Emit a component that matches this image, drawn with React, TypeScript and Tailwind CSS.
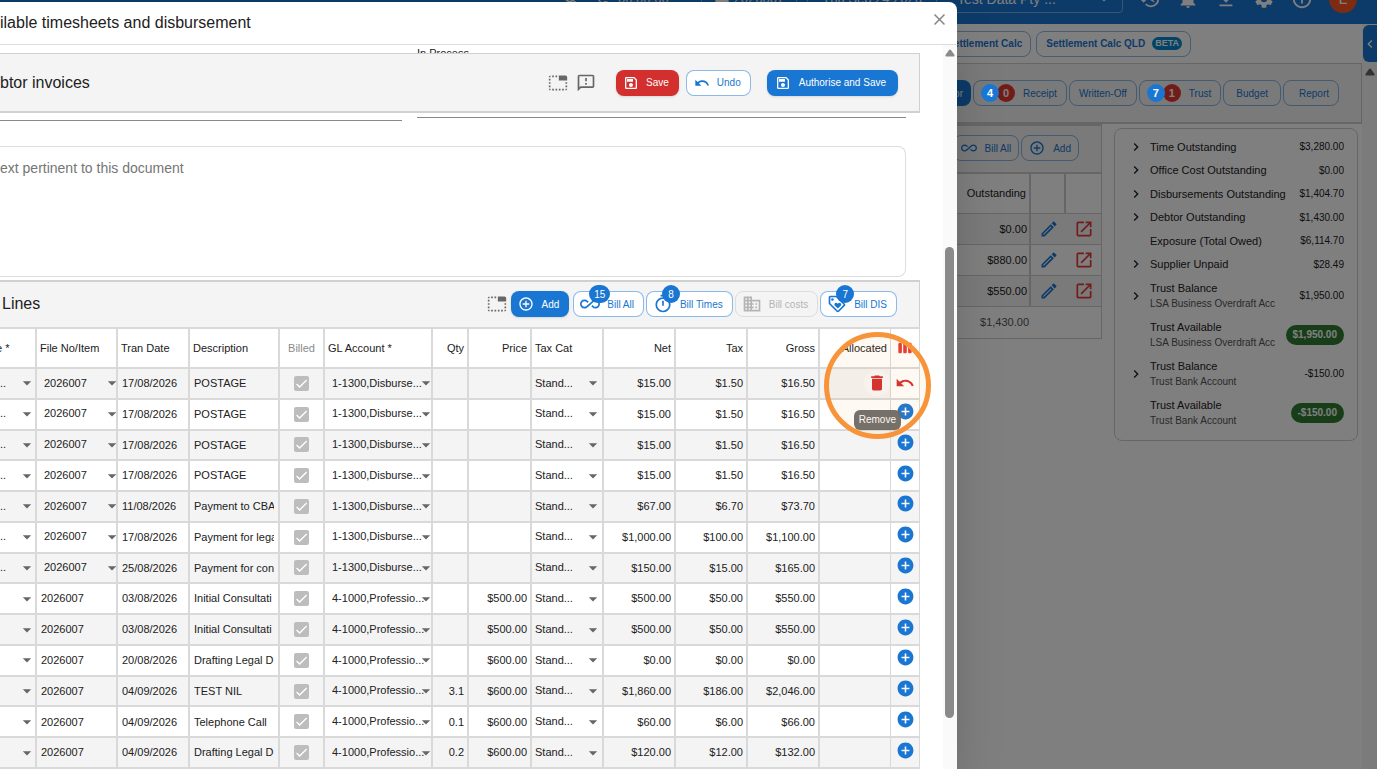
import type { ReactNode } from "react";
import clsx from "clsx";
import {
  MdAddCircle,
  MdAddCircleOutline,
  MdAllInclusive,
  MdArrowDropDown,
  MdCheck,
  MdChevronLeft,
  MdChevronRight,
  MdClose,
  MdDelete,
  MdDomain,
  MdDownload,
  MdHistory,
  MdNotifications,
  MdOpenInNew,
  MdOutlineFeedback,
  MdOutlineInfo,
  MdOutlineLoyalty,
  MdOutlineModeEdit,
  MdOutlineSave,
  MdOutlineTimer,
  MdPhone,
  MdSearch,
  MdSettings,
  MdTabUnselected,
  MdUndo,
  MdViewWeek,
  MdWork,
} from "react-icons/md";

type Line = {
  file: string;
  fileSelect?: boolean;
  date: string;
  description: string;
  account: string;
  qty?: string;
  price?: string;
  net: string;
  tax: string;
  gross: string;
};

const DIS = "1-1300,Disburse...";
const PRO = "4-1000,Professio...";

const lines: Line[] = [
  { file: "2026007", fileSelect: true, date: "17/08/2026", description: "POSTAGE", account: DIS, net: "$15.00", tax: "$1.50", gross: "$16.50" },
  { file: "2026007", fileSelect: true, date: "17/08/2026", description: "POSTAGE", account: DIS, net: "$15.00", tax: "$1.50", gross: "$16.50" },
  { file: "2026007", fileSelect: true, date: "17/08/2026", description: "POSTAGE", account: DIS, net: "$15.00", tax: "$1.50", gross: "$16.50" },
  { file: "2026007", fileSelect: true, date: "17/08/2026", description: "POSTAGE", account: DIS, net: "$15.00", tax: "$1.50", gross: "$16.50" },
  { file: "2026007", fileSelect: true, date: "11/08/2026", description: "Payment to CBA", account: DIS, net: "$67.00", tax: "$6.70", gross: "$73.70" },
  { file: "2026007", fileSelect: true, date: "17/08/2026", description: "Payment for lega", account: DIS, net: "$1,000.00", tax: "$100.00", gross: "$1,100.00" },
  { file: "2026007", fileSelect: true, date: "25/08/2026", description: "Payment for con", account: DIS, net: "$150.00", tax: "$15.00", gross: "$165.00" },
  { file: "2026007", date: "03/08/2026", description: "Initial Consultati", account: PRO, price: "$500.00", net: "$500.00", tax: "$50.00", gross: "$550.00" },
  { file: "2026007", date: "03/08/2026", description: "Initial Consultati", account: PRO, price: "$500.00", net: "$500.00", tax: "$50.00", gross: "$550.00" },
  { file: "2026007", date: "20/08/2026", description: "Drafting Legal D", account: PRO, price: "$600.00", net: "$0.00", tax: "$0.00", gross: "$0.00" },
  { file: "2026007", date: "04/09/2026", description: "TEST NIL", account: PRO, qty: "3.1", price: "$600.00", net: "$1,860.00", tax: "$186.00", gross: "$2,046.00" },
  { file: "2026007", date: "04/09/2026", description: "Telephone Call", account: PRO, qty: "0.1", price: "$600.00", net: "$60.00", tax: "$6.00", gross: "$66.00" },
  { file: "2026007", date: "04/09/2026", description: "Drafting Legal D", account: PRO, qty: "0.2", price: "$600.00", net: "$120.00", tax: "$12.00", gross: "$132.00" },
];

const balances = [
  { label: "Time Outstanding", value: "$3,280.00", open: true },
  { label: "Office Cost Outstanding", value: "$0.00", open: true },
  { label: "Disbursements Outstanding", value: "$1,404.70", open: true },
  { label: "Debtor Outstanding", value: "$1,430.00", open: true },
  { label: "Exposure (Total Owed)", value: "$6,114.70", open: false },
  { label: "Supplier Unpaid", value: "$28.49", open: true },
];

const trusts = [
  { label: "Trust Balance", account: "LSA Business Overdraft Acc", value: "$1,950.00", open: true },
  { label: "Trust Available", account: "LSA Business Overdraft Acc", value: "$1,950.00", open: false },
  { label: "Trust Balance", account: "Trust Bank Account", value: "-$150.00", open: true },
  { label: "Trust Available", account: "Trust Bank Account", value: "-$150.00", open: false },
];

const OutlineButton = ({ children, className }: { children: ReactNode; className?: string }) => (
  <button
    className={clsx(
      "relative flex h-[26px] shrink-0 items-center rounded-lg border border-[#1976d2]/50 whitespace-nowrap text-[#1976d2]",
      className
    )}
  >
    {children}
  </button>
);

const Badge = ({ children }: { children: ReactNode }) => (
  <span className="absolute -top-[7px] left-[15px] flex h-[18px] min-w-[18px] items-center justify-center rounded-full bg-[#1976d2] px-[5px] text-[10px] text-white">
    {children}
  </span>
);

const CountPair = ({ first, second }: { first: string; second: string }) => (
  <span className="flex text-[11px] font-bold text-white">
    <span className="z-10 flex size-[18px] items-center justify-center rounded-full bg-[#1976d2]">{first}</span>
    <span className="-ml-[2px] flex size-[18px] items-center justify-center rounded-full bg-[#e53935]">{second}</span>
  </span>
);

const CellSelect = ({ value, label, arrow }: { value: string; label: string; arrow: string }) => (
  <span className="relative flex items-center overflow-hidden">
    <select aria-label={label} className="w-full appearance-none pb-px outline-none">
      <option>{value}</option>
    </select>
    <MdArrowDropDown className={clsx("pointer-events-none absolute size-5 text-[#666]", arrow)} />
  </span>
);

const TopBar = () => (
  <header className="flex h-6 shrink-0 items-end justify-end overflow-hidden bg-[#1976d2] pr-5 pb-[11px] text-[14px] text-white">
    <div className="flex h-7 items-center text-[13px] whitespace-nowrap">
      <MdSearch className="mr-3 size-5" />
      <MdPhone className="mr-2 size-4" />
      <span className="mr-8">00:00:00</span>
      <span className="mr-[10px] flex items-center gap-1 border-x border-white/40 px-3">
        <MdWork className="size-4" /> 2026007
      </span>
      <span className="border-l border-white/40 px-[14px]">Thu Sep 24 2026</span>
    </div>
    <div className="flex h-7 items-center gap-4">
      <button className="flex h-7 w-[187px] items-center justify-between rounded-sm border border-white/40 pr-2 pl-5">
        Test Data Pty ...
        <MdArrowDropDown className="size-5" />
      </button>
      <MdHistory className="size-[22px]" />
      <MdNotifications className="size-[22px]" />
      <MdDownload className="size-[22px]" />
      <MdSettings className="size-[22px]" />
      <MdOutlineInfo className="size-[22px]" />
      <span className="flex size-7 items-center justify-center rounded-full bg-[#ff5722] text-[16px]">L</span>
    </div>
  </header>
);

const BillTable = () => (
  <section className="min-w-0 flex-1 self-start border-t-2 border-r border-[#ccc]">
    <div className="flex h-[46px] items-center justify-end gap-[2px] bg-[#f4f4f4] pr-[22px] pb-[2px]">
      <OutlineButton className="gap-2 px-[7px] text-[10px]">
        <MdAllInclusive className="size-4" /> Bill All
      </OutlineButton>
      <OutlineButton className="gap-2 px-[7px] text-[10px]">
        <MdAddCircleOutline className="size-4" /> Add
      </OutlineButton>
    </div>
    <table className="w-full table-fixed border-separate border-spacing-0 border-t-2 border-[#ccc] text-right text-[11px]">
      <colgroup>
        <col />
        <col className="w-[35px]" />
        <col className="w-[35px]" />
      </colgroup>
      <thead>
        <tr className="h-10">
          <th className="border-r-2 border-b border-[#ccc] pr-[3px] text-right font-normal">Outstanding</th>
          <th className="border-r-2 border-b border-[#ccc]"></th>
          <th className="border-b border-[#ccc]"></th>
        </tr>
      </thead>
      <tbody>
        {["$0.00", "$880.00", "$550.00"].map((amount) => (
          <tr key={amount} className="h-[31px] odd:bg-[#f4f4f4]">
            <td className="border-r-2 border-b border-[#ccc] pr-[2px]">{amount}</td>
            <td className="border-b border-[#ccc]">
              <button aria-label="Edit" className="mx-auto flex text-[#1976d2]">
                <MdOutlineModeEdit className="size-5" />
              </button>
            </td>
            <td className="border-b border-[#ccc]">
              <button aria-label="Open" className="mx-auto flex text-[#e53935]">
                <MdOpenInNew className="size-5" />
              </button>
            </td>
          </tr>
        ))}
      </tbody>
      <tfoot>
        <tr className="h-8 text-[#555]">
          <td className="border-b border-[#ccc] pr-[2px]">$1,430.00</td>
          <td className="border-b border-[#ccc]"></td>
          <td className="border-b border-[#ccc]"></td>
        </tr>
      </tfoot>
    </table>
  </section>
);

const BalanceCard = () => (
  <section className="mt-1 mr-1 ml-3 w-[244px] shrink-0 rounded-lg border border-[#ccc] px-[13px] pt-[6px] pb-2 text-[11px]">
    <div className="flex h-[141px] flex-col">
      {balances.map((row) => (
        <div key={row.label} className="flex flex-1 items-center">
          <span className="w-[22px]">{row.open && <MdChevronRight className="size-4" />}</span>
          <span className="flex-1 whitespace-nowrap">{row.label}</span>
          <span className="text-[10px]">{row.value}</span>
        </div>
      ))}
    </div>
    {trusts.map((row, i) => (
      <div key={i} className="flex h-[39px] items-center">
        <span className="w-[22px]">{row.open && <MdChevronRight className="size-4" />}</span>
        <span className="flex-1 leading-4 whitespace-nowrap">
          {row.label}
          <small className="block text-[10px] leading-4 text-[#555]">{row.account}</small>
        </span>
        {row.open ? (
          <span className="text-[10px]">{row.value}</span>
        ) : (
          <span className="rounded-full bg-[#2e7d32] px-[7px] text-[10px] leading-5 font-bold text-white">{row.value}</span>
        )}
      </div>
    ))}
  </section>
);

const MatterPage = () => (
  <div className="relative flex h-full flex-col bg-white">
    <TopBar />
    <div className="flex min-h-0 flex-1">
      <main className="flex min-w-0 flex-1 flex-col">
        <nav className="flex h-[39px] shrink-0 items-center justify-end gap-[5px] pr-[171px] text-[10px] font-bold">
          <OutlineButton className="px-2">Settlement Calc</OutlineButton>
          <OutlineButton className="gap-[7px] pr-2 pl-[9px]">
            Settlement Calc QLD
            <span className="rounded-full bg-[#0288d1] px-[3px] text-[9px] leading-[13px] text-white">BETA</span>
          </OutlineButton>
        </nav>
        <div className="flex h-[61px] shrink-0 items-center justify-end gap-[2px] border-t border-r border-b-2 border-[#ccc] bg-[#f4f4f4] pr-[22px] text-[10px]">
          <button className="h-[26px] rounded-lg bg-[#1976d2] px-2 text-white">Debtor</button>
          <OutlineButton className="gap-2 pr-[9px] pl-[7px]">
            <CountPair first="4" second="0" /> Receipt
          </OutlineButton>
          <OutlineButton className="px-[9px]">Written-Off</OutlineButton>
          <OutlineButton className="gap-2 pr-[9px] pl-[7px]">
            <CountPair first="7" second="1" /> Trust
          </OutlineButton>
          <OutlineButton className="px-3">Budget</OutlineButton>
          <OutlineButton className="pr-[9px] pl-[15px]">Report</OutlineButton>
        </div>
        <div className="flex">
          <BillTable />
          <BalanceCard />
        </div>
      </main>
      <div className="flex w-[15px] justify-center bg-[#f6f6f6] pt-11">
        <svg viewBox="0 0 10 8" className="h-2 w-[10px] fill-[#666]">
          <path d="M4 1Q5 0 6 1L9.5 6Q10 7.5 8.5 7.5H1.5Q0 7.5 .5 6Z" />
        </svg>
      </div>
    </div>
    <button aria-label="Expand" className="absolute top-[25px] right-0 flex h-[37px] w-[14px] items-center justify-center rounded-l-md bg-[#1976d2] text-white">
      <MdChevronLeft className="size-4 shrink-0" />
    </button>
  </div>
);

const InvoiceHeader = () => (
  <div className="relative h-[101px]">
    {/* fields scrolled under the sticky bar */}
    <div className="flex h-full gap-[15px] pr-[14px] text-[11px]">
      <div className="mb-[25px] flex-402 border-b border-[#888]"></div>
      <div className="mb-7 flex flex-489 justify-between border-b border-[#888]">
        <span>In Process</span>
        <MdArrowDropDown className="size-5" />
      </div>
    </div>
    <div className="absolute inset-x-0 top-2 flex h-[60px] items-center border border-b-2 border-l-0 border-[#d0d0d0] bg-[#f4f4f4] pr-[21px] text-[10px]">
      <h2 className="flex-1 text-[16px]">btor invoices</h2>
      <MdTabUnselected className="size-5 text-[#666]" />
      <MdOutlineFeedback className="mr-5 ml-2 size-5 text-[#666]" />
      <button className="flex h-[26px] items-center gap-[7px] rounded-lg bg-[#d32f2f] pr-[10px] pl-[7px] text-white shadow">
        <MdOutlineSave className="size-4" /> Save
      </button>
      <OutlineButton className="mr-4 ml-[7px] gap-[7px] bg-white pr-[9px] pl-[7px]">
        <MdUndo className="size-4" /> Undo
      </OutlineButton>
      <button className="flex h-[26px] items-center gap-2 rounded-lg bg-[#1976d2] pr-3 pl-2 text-white shadow">
        <MdOutlineSave className="size-4" /> Authorise and Save
      </button>
    </div>
  </div>
);

const LinesToolbar = () => (
  <div className="flex h-[47px] items-center gap-[2px] border-t-2 border-r border-[#d0d0d0] bg-[#f4f4f4] pr-[22px] pb-px text-[10px]">
    <h2 className="flex-1 pl-[2px] text-[16px]">Lines</h2>
    <MdTabUnselected className="mr-[2px] size-5 text-[#666]" />
    <button className="mr-[2px] flex h-[26px] items-center gap-[7px] rounded-lg bg-[#1976d2] pr-[10px] pl-[7px] text-white shadow">
      <MdAddCircleOutline className="size-4" /> Add
    </button>
    <OutlineButton className="gap-[7px] bg-white pr-[9px] pl-[6px]">
      <MdAllInclusive className="size-5" /> Bill All
      <Badge>15</Badge>
    </OutlineButton>
    <OutlineButton className="gap-[7px] bg-white pr-[9px] pl-[6px]">
      <MdOutlineTimer className="size-5" /> Bill Times
      <Badge>8</Badge>
    </OutlineButton>
    <button disabled className="flex h-[26px] items-center gap-[7px] rounded-lg border border-[#ddd] pr-[9px] pl-[6px] text-[#b5b5b5]">
      <MdDomain className="size-5" /> Bill costs
    </button>
    <OutlineButton className="gap-[7px] bg-white pr-[9px] pl-[6px]">
      <MdOutlineLoyalty className="size-5" /> Bill DIS
      <Badge>7</Badge>
    </OutlineButton>
  </div>
);

const numeric = "pr-[3px] text-right";

const LinesTable = () => (
  <div className="relative">
    <table className="h-[442px] w-full table-fixed border-separate border-spacing-0 border-t-2 border-[#d9d9d9] text-left text-[11px] whitespace-nowrap [&_td]:overflow-hidden [&_td]:border-r-2 [&_td]:border-b-2 [&_td]:border-[#d9d9d9] [&_th]:border-r-2 [&_th]:border-b-2 [&_th]:border-[#d9d9d9] [&_th]:font-normal [&_tr>*:last-child]:border-r [&_tr>*:nth-last-child(2)]:border-r">
      <colgroup>
        <col />
        <col className="w-[81px]" />
        <col className="w-[72px]" />
        <col className="w-[90px]" />
        <col className="w-[45px]" />
        <col className="w-[108px]" />
        <col className="w-[36px]" />
        <col className="w-[63px]" />
        <col className="w-[72px]" />
        <col className="w-[72px]" />
        <col className="w-[72px]" />
        <col className="w-[72px]" />
        <col className="w-[71px]" />
        <col className="w-[29px]" />
      </colgroup>
      <thead>
        <tr className="h-10">
          <th>
            <span className="-ml-1">e *</span>
          </th>
          <th className="pl-[3px]">File No/Item</th>
          <th className="pl-[3px]">Tran Date</th>
          <th className="pl-[3px]">Description</th>
          <th className="text-center text-[#8a8a8a]">Billed</th>
          <th className="pl-[3px]">GL Account *</th>
          <th className={numeric}>Qty</th>
          <th className={numeric}>Price</th>
          <th className="pl-[3px]">Tax Cat</th>
          <th className={numeric}>Net</th>
          <th className={numeric}>Tax</th>
          <th className={numeric}>Gross</th>
          <th className={numeric}>Allocated</th>
          <th>
            <button aria-label="Columns" className="mx-auto flex text-[#e53935]">
              <MdViewWeek className="size-4" />
            </button>
          </th>
        </tr>
      </thead>
      <tbody>
        {lines.map((line, i) => (
          <tr key={i} className="odd:bg-[#f4f4f4]">
            <td>
              <CellSelect label="Type" value={line.fileSelect ? ".." : ""} arrow="-right-[2px]" />
            </td>
            <td className={line.fileSelect ? "pl-[7px]" : "pl-1"}>
              {line.fileSelect ? <CellSelect label="File No/Item" value={line.file} arrow="-right-[6px]" /> : line.file}
            </td>
            <td className="pl-1">{line.date}</td>
            <td className="px-1">
              <div className="overflow-hidden">{line.description}</div>
            </td>
            <td>
              <span className="relative mx-auto flex size-[15px]">
                <input type="checkbox" aria-label="Billed" defaultChecked disabled className="size-full appearance-none rounded-xs bg-[#bdbdbd]" />
                <MdCheck className="absolute inset-0 size-full text-white" />
              </span>
            </td>
            <td className="pl-[7px]">
              <CellSelect label="GL Account" value={line.account} arrow="-right-[5px]" />
            </td>
            <td className={numeric}>{line.qty}</td>
            <td className={numeric}>{line.price}</td>
            <td className="pl-[3px]">
              <CellSelect label="Tax Cat" value="Stand..." arrow="-right-px" />
            </td>
            <td className={numeric}>{line.net}</td>
            <td className={numeric}>{line.tax}</td>
            <td className={numeric}>{line.gross}</td>
            <td>
              {i === 0 && (
                <button aria-label="Remove" className="ml-auto flex size-[26px] items-center justify-center rounded-full bg-white/40 text-[#d32f2f]">
                  <MdDelete className="size-5" />
                </button>
              )}
            </td>
            <td className={i === 0 ? "bg-white" : ""}>
              {i === 0 ? (
                <button aria-label="Undo" className="flex h-[26px] w-full items-center justify-center text-[#d32f2f]">
                  <MdUndo className="size-5" />
                </button>
              ) : (
                <button aria-label="Add line" className="flex h-[26px] w-full items-center justify-center pb-[5px] text-[#1976d2]">
                  <MdAddCircle className="size-[19px]" />
                </button>
              )}
            </td>
          </tr>
        ))}
      </tbody>
    </table>
    <div role="tooltip" className="absolute top-[83px] right-[19px] rounded-md bg-[#666]/95 px-[5px] text-[10px] leading-5 text-white">
      Remove
    </div>
    <div className="pointer-events-none absolute top-[5px] -right-[11px] size-[107px] rounded-full border-5 border-[#f7943a] bg-[#f7943a]/6"></div>
  </div>
);

const InvoiceDialog = () => (
  <div role="dialog" aria-label="Available timesheets" className="absolute top-[2px] right-[420px] bottom-0 left-0 flex flex-col overflow-hidden rounded-tr-lg bg-white shadow-2xl">
    <div className="flex h-[43px] shrink-0 items-center justify-between border-b border-[#ddd] pr-2">
      <h1 className="text-[16px]">ilable timesheets and disbursement</h1>
      <button aria-label="Close" className="mb-2 text-[#888]">
        <MdClose className="size-[19px]" />
      </button>
    </div>
    <div className="flex min-h-0 flex-1">
      <div className="mr-[23px] min-w-0 flex-1">
        <InvoiceHeader />
        <div className="mb-[3px] pr-[14px]">
          <textarea
            aria-label="Document text"
            placeholder="ext pertinent to this document"
            className="block h-[131px] w-full resize-none rounded-r-lg border border-l-0 border-[#ddd] py-3 text-[14px] leading-[18px] outline-none placeholder:text-[#757575]"
          />
        </div>
        <LinesToolbar />
        <LinesTable />
      </div>
      <div className="flex w-[14px] flex-col items-center bg-[#fafafa] pt-1 pr-px">
        <svg viewBox="0 0 10 8" className="h-2 w-[10px] fill-[#8a8a8a]">
          <path d="M4 1Q5 0 6 1L9.5 6Q10 7.5 8.5 7.5H1.5Q0 7.5 .5 6Z" />
        </svg>
        <div className="flex-190"></div>
        <div className="w-[9px] flex-471 rounded-full bg-[#8a8a8a]"></div>
        <div className="flex-51"></div>
      </div>
    </div>
  </div>
);

export default function App() {
  return (
    <div className="relative h-screen overflow-hidden font-['Liberation_Sans',Arial,sans-serif] text-[#212121]">
      <MatterPage />
      <div className="absolute inset-0 bg-black/50"></div>
      <InvoiceDialog />
    </div>
  );
}
